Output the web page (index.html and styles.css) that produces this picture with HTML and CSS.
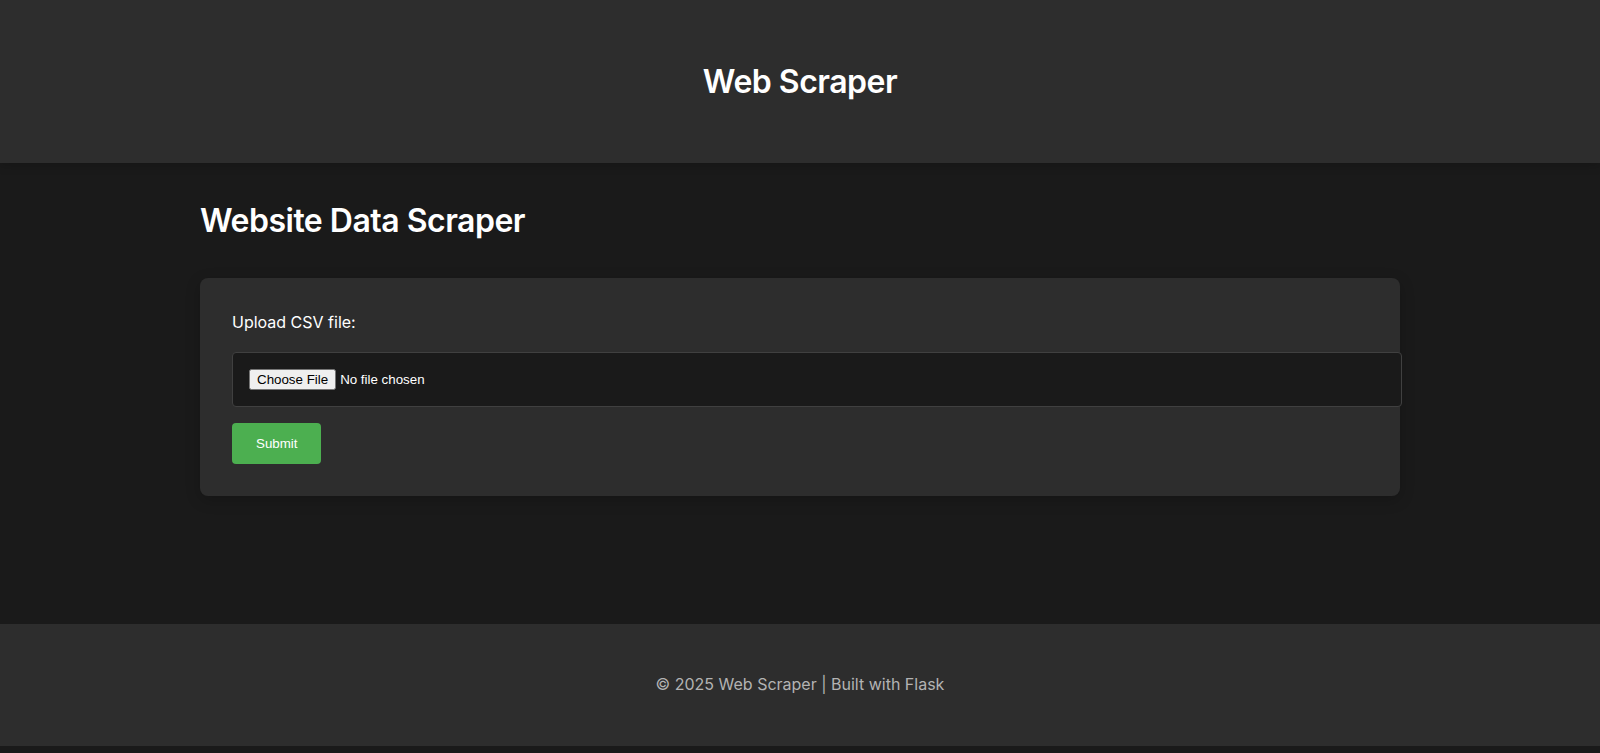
FILE: index.html
```html
<!DOCTYPE html>
<html lang="en">
<head>
<meta charset="utf-8">
<meta name="viewport" content="width=device-width, initial-scale=1">
<title>Web Scraper</title>
<link rel="stylesheet" href="styles.css">
</head>
<body>
<header class="site-header">
  <h1 class="title">Web Scraper</h1>
</header>
<main class="content">
  <h1 class="title">Website Data Scraper</h1>
  <form class="upload-form">
    <label class="upload-label" for="file">Upload CSV file:</label>
    <input class="upload-input" type="file" id="file" name="file" accept=".csv">
    <button class="submit-button" type="submit">Submit</button>
  </form>
</main>
<footer class="site-footer">
  <p class="footer-text">© 2025 Web Scraper | Built with Flask</p>
</footer>
</body>
</html>
```

FILE: styles.css
```css
body {
  margin: 0;
  font-family: Inter, sans-serif;
  font-size: 16px;
  line-height: 1.6;
  color: #fff;
  background: #1a1a1a;
}

.site-header {
  padding: 32px;
  text-align: center;
  background: #2d2d2d;
  box-shadow: 0 2px 10px rgba(0, 0, 0, 0.2);
}

.title {
  margin: 24px 0;
  font-size: 32px;
  font-weight: 600;
  letter-spacing: -0.5px;
}

.content {
  max-width: 1200px;
  min-height: 397px;
  margin: 32px auto;
}

.content .title {
  margin: 0 0 32px;
}

.upload-form {
  padding: 32px;
  background: #2d2d2d;
  border-radius: 8px;
  box-shadow: 0 4px 15px rgba(0, 0, 0, 0.2);
}

.upload-label {
  display: block;
  margin-bottom: 16px;
}

.upload-input {
  display: block;
  width: 100%;
  margin-bottom: 16px;
  padding: 16px;
  color: #fff;
  background: #1a1a1a;
  border: 1px solid #404040;
  border-radius: 4px;
}

.submit-button {
  padding: 13px 24px;
  color: #fff;
  background: #4caf50;
  border: none;
  border-radius: 4px;
  cursor: pointer;
}

.site-footer {
  padding: 32px;
  text-align: center;
  color: #b3b3b3;
  background: #2d2d2d;
}

.footer-text {
  margin: 16px 0;
}
```
